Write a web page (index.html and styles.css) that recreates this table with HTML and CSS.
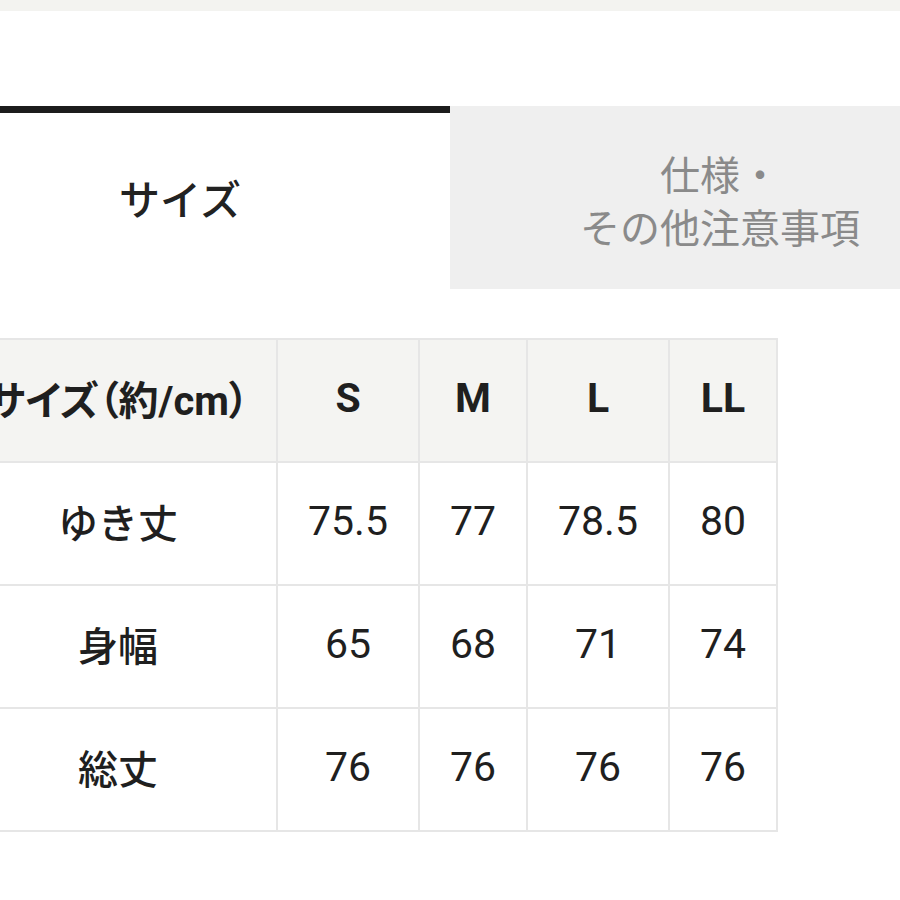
FILE: index.html
```html
<!DOCTYPE html>
<html lang="ja">
<head>
<meta charset="utf-8">
<link rel="stylesheet" href="styles.css">
</head>
<body>
<div class="topbar"></div>
<div class="tabs">
  <div class="tab tab-active">サイズ</div>
  <div class="tab tab-inactive">仕様・<br>その他注意事項</div>
</div>
<div class="size-table">
  <div class="cell head label">サイズ（約/cm）</div>
  <div class="cell head">S</div>
  <div class="cell head">M</div>
  <div class="cell head">L</div>
  <div class="cell head">LL</div>

  <div class="cell label">ゆき丈</div>
  <div class="cell">75.5</div>
  <div class="cell">77</div>
  <div class="cell">78.5</div>
  <div class="cell">80</div>

  <div class="cell label">身幅</div>
  <div class="cell">65</div>
  <div class="cell">68</div>
  <div class="cell">71</div>
  <div class="cell">74</div>

  <div class="cell label">総丈</div>
  <div class="cell">76</div>
  <div class="cell">76</div>
  <div class="cell">76</div>
  <div class="cell">76</div>
</div>
</body>
</html>
```

FILE: styles.css
```css
html, body {
  margin: 0;
  padding: 0;
  background: #ffffff;
  overflow: hidden;
}
body {
  font-family: Roboto, "Noto Sans CJK JP", sans-serif;
  color: #222222;
  width: 900px;
  height: 900px;
}
.topbar {
  height: 11px;
  background: #f3f3f0;
}
.tabs {
  display: flex;
  margin-top: 95px;
  margin-left: -90px;
  width: 1080px;
}
.tab {
  width: 540px;
  height: 183px;
  box-sizing: border-box;
  display: flex;
  align-items: center;
  justify-content: center;
  text-align: center;
  font-family: "Noto Sans CJK JP", sans-serif;
  font-size: 40px;
  line-height: 53px;
}
.tab-active {
  border-top: 7px solid #1c1c1c;
  background: #ffffff;
  font-weight: 500;
  font-size: 41px;
  color: #222222;
  padding-bottom: 8px;
}
.tab-inactive {
  background: #efefef;
  color: #8a8a8a;
  font-weight: 400;
  padding-top: 4px;
}
.size-table {
  display: grid;
  grid-template-columns: 316px 140px 106px 140px 106px;
  grid-auto-rows: 121px;
  gap: 2px;
  padding: 2px;
  background: #e6e6e6;
  width: max-content;
  margin-top: 49px;
  margin-left: -42px;
}
.cell {
  background: #ffffff;
  display: flex;
  align-items: center;
  justify-content: center;
  padding-bottom: 5px;
  box-sizing: border-box;
  font-size: 41px;
  font-weight: 400;
  color: #1f1f1f;
}
.cell.head {
  background: #f4f4f2;
  font-weight: 700;
}
.cell.label {
  font-family: "Noto Sans CJK JP", sans-serif;
  font-size: 40px;
  font-weight: 500;
}
.cell.head.label {
  font-feature-settings: "palt";
  font-family: Roboto, "Noto Sans CJK JP", sans-serif;
  font-weight: 700;
}
```
